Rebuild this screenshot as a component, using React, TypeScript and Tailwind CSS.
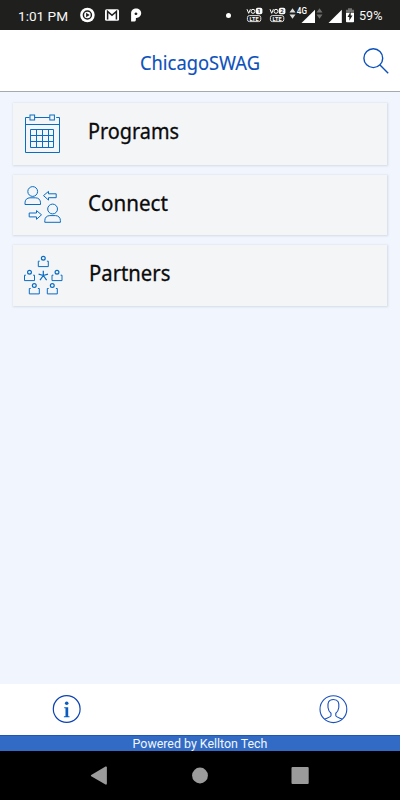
import type { ReactNode } from "react";

interface MenuItem {
  label: string;
  icon: ReactNode;
  cardClass: string;
  labelClass: string;
}

function VolteIcon({ sim }: { sim: number }) {
  return (
    <svg width="18" height="16" viewBox="0 0 18 16" fill="none">
      <path d="M1 2.2 2.7 6.3 4.4 2.2" stroke="#fff" strokeWidth="1" />
      <circle cx="7" cy="4.3" r="2" stroke="#fff" strokeWidth="1" />
      <rect x="9.8" y="0.8" width="6.6" height="6.4" rx="1.8" fill="#fff" />
      <text
        x="13.1"
        y="6.2"
        fontSize="6"
        fontWeight="700"
        textAnchor="middle"
        fill="#1f1f1d"
      >
        {sim}
      </text>
      <rect x="1.4" y="8.6" width="13.4" height="6" rx="2" stroke="#ddd" />
      <text
        x="8.1"
        y="13.6"
        fontSize="5.6"
        fontWeight="700"
        textAnchor="middle"
        fill="#fff"
      >
        LTE
      </text>
    </svg>
  );
}

function StatusBar() {
  return (
    <div className="flex h-[30px] items-center bg-[#1f1f1d] font-['Roboto',sans-serif] text-white">
      <span className="ml-[18px] w-[61px] whitespace-nowrap pt-px text-[13.6px] leading-[30px] text-[#f8f8f8]">
        1:01 PM
      </span>
      <svg width="64" height="16" viewBox="79 7 64 16" fill="none">
        <circle cx="87.4" cy="15" r="7.3" fill="#fff" />
        <circle cx="87.4" cy="15" r="4" stroke="#1f1f1d" strokeWidth="1.5" />
        <path d="M86.1 12.8v4.4l3.5-2.2z" fill="#1f1f1d" />
        <rect x="105" y="9.2" width="14" height="11.6" rx="1.5" fill="#fff" />
        <path
          d="M107.6 19.4v-8l4.4 3.9 4.4-3.9v8"
          stroke="#1f1f1d"
          strokeWidth="1.5"
        />
        <path
          d="M131.1 21.6v-8.3c0-3 2.2-4.9 5-4.9s5.1 2 5.1 4.7-2.2 4.8-4.8 4.8h-.5v1.8c0 1.3-.8 1.9-2 1.9z"
          fill="#fff"
        />
        <path d="M135.1 14.4v-1.3h1.7v1.3z" fill="#1f1f1d" stroke="#1f1f1d" />
      </svg>
      <div className="ml-[83px] h-[5px] w-[5px] rounded-full bg-white" />
      <div className="ml-[15px] flex gap-[5px]">
        <VolteIcon sim={1} />
        <VolteIcon sim={2} />
      </div>
      <svg width="67" height="20" viewBox="287 5 67 20">
        <path d="M289.5 12.5h6l-3-4.3zM289.5 14.5h6l-3 4.3z" fill="#ddd" />
        <path d="M316.5 12.5h6l-3-4.3zM316.5 14.5h6l-3 4.3z" fill="#70706e" />
        <path d="M301.5 23h13.5V9.8z" fill="#fff" />
        <text
          x="296.8"
          y="14"
          fontSize="9"
          fontWeight="500"
          textLength="10.2"
          lengthAdjust="spacingAndGlyphs"
          fill="#fff"
          stroke="#1f1f1d"
          strokeWidth="1.4"
          paintOrder="stroke"
        >
          4G
        </text>
        <path d="M328.5 23h13.3V9.8z" fill="#fff" />
        <path d="M346 13V9.8h2V8.3h4v1.5h2V13z" fill="#70706e" />
        <path d="M346 13h8v8.4q0 .8-.8.8h-6.4q-.8 0-.8-.8z" fill="#fff" />
        <path d="M350.7 11.5v4h1.8l-3.2 5.3v-3.7h-1.8z" fill="#1f1f1d" />
      </svg>
      <span className="ml-[5px] pt-px text-[12.6px] leading-[30px] text-[#f8f8f8]">
        59%
      </span>
    </div>
  );
}

function CalendarIcon() {
  return (
    <svg width="40" height="42" viewBox="22 112 40 42" fill="none">
      <g stroke="#0b6cc4">
        <path d="M29.5 117.5h-4v35h34v-35h-3.3M34.8 117.5h14.7M25.5 124.5h34" />
        <rect x="30" y="115" width="4.6" height="5" />
        <rect x="49.8" y="115" width="4.6" height="5" />
        <path d="M30.5 129.5h23v18h-23zM36.5 129.5v18M42.5 129.5v18M48.5 129.5v18M30.5 135.5h23M30.5 141.5h23" />
      </g>
    </svg>
  );
}

function ConnectIcon() {
  return (
    <svg width="40" height="40" viewBox="22 185 40 40" fill="none">
      <g stroke="#0b6cc4">
        <circle cx="32.7" cy="191.5" r="4.9" />
        <path d="M25 204.5v-1.7c0-3 2-5 5-5h5.5c3 0 5 2 5 5v1.7z" />
        <circle cx="52.6" cy="209" r="4.9" />
        <path d="M44.8 222.3v-1.7c0-3 2-5 5-5h5.6c3 0 5 2 5 5v1.7z" />
        <path d="m43.5 195.6 5-4.2v2.4h7.7v3.9h-7.7v2.4z" />
        <path d="m41.5 214.8-5-4.2v2.4h-7.3v3.9h7.3v2.4z" />
      </g>
    </svg>
  );
}

const people = [
  { x: 43.3, y: 258 },
  { x: 29.5, y: 272 },
  { x: 57, y: 272 },
  { x: 34.3, y: 285.3 },
  { x: 52.3, y: 285.3 },
];

function PartnersIcon() {
  return (
    <svg width="42" height="40" viewBox="22 255 42 40" fill="none">
      <g stroke="#0b6cc4">
        {people.map((p) => (
          <g key={`${p.x}-${p.y}`} transform={`translate(${p.x} ${p.y})`}>
            <circle cx="0" cy="0.2" r="1.9" strokeWidth="1.2" />
            <path d="M-3.6 3.2h-1.4v5.4h10V3.2h-1.4" />
          </g>
        ))}
        <path
          d="M43.3 275.5v-4.7M43.3 275.5l-4.7-1.3M43.3 275.5l4.7-1.3M43.3 275.5l-3.3 4.7M43.3 275.5l3.3 4.7"
          strokeWidth="1.2"
        />
      </g>
    </svg>
  );
}

const items: MenuItem[] = [
  {
    label: "Programs",
    icon: <CalendarIcon />,
    cardClass: "h-[62px] pt-[9px]",
    labelClass: "ml-[26px] mt-[4px] scale-x-[0.945]",
  },
  {
    label: "Connect",
    icon: <ConnectIcon />,
    cardClass: "h-[60px] pt-[10px]",
    labelClass: "ml-[26px] mt-[3px] scale-x-[0.98]",
  },
  {
    label: "Partners",
    icon: <PartnersIcon />,
    cardClass: "h-[61px] pt-[10px]",
    labelClass: "ml-[27px] mt-[3px] scale-x-[0.965]",
  },
];

export default function App() {
  return (
    <div className="flex h-[800px] w-[400px] flex-col overflow-hidden bg-[#f0f5fe]">
      <StatusBar />

      <header className="flex h-[62px] items-start border-b border-[#a5a9b0] bg-white pl-[139.500px]">
        <h1 className="mt-[19px] w-[222.500px] text-[20px] leading-[28px] font-['Noto_Sans',sans-serif] text-[#0c51bb]">
          <span className="inline-block origin-left scale-x-[0.915] whitespace-nowrap [-webkit-text-stroke:0.15px_#0c51bb]">
            ChicagoSWAG
          </span>
        </h1>
        <svg width="28" height="28" viewBox="362 47 28 28" fill="none" className="mt-[17px]">
          <g stroke="#0c51bb" strokeWidth="1.4">
            <circle cx="373.3" cy="58.2" r="9.4" />
            <path d="m380 65 8.2 8.2" />
          </g>
        </svg>
      </header>

      <main className="flex flex-1 flex-col gap-[10px] px-[13px] pt-[11px]">
        {items.map((item) => (
          <div
            key={item.label}
            className={`flex items-start bg-[#f3f5f7] pl-[9px] shadow-[0_0_2px_0.5px_#d3dae4] ${item.cardClass}`}
          >
            <div className="w-[40px] shrink-0">{item.icon}</div>
            <span
              className={`origin-left text-[21px] leading-[30px] font-['Noto_Sans',sans-serif] text-[#0b0b0b] [-webkit-text-stroke:0.3px_#0b0b0b] ${item.labelClass}`}
            >
              {item.label}
            </span>
          </div>
        ))}
      </main>

      <footer>
        <div className="flex h-[51px] items-start justify-between bg-white px-[52px] pt-[10px]">
          <svg width="30" height="30" viewBox="52 694 30 30" fill="none">
            <circle cx="66.7" cy="709" r="13.4" stroke="#0c42b4" strokeWidth="1.2" />
            <circle cx="66.7" cy="703.2" r="1.8" fill="#0b5cc0" />
            <path
              d="M64.2 707.2h4v9h1.3v1h-5.6v-1h1.6v-8h-1.3z"
              fill="#0b5cc0"
            />
          </svg>
          <svg width="30" height="30" viewBox="318 694 30 30" fill="none">
            <g stroke="#1a50bc" strokeWidth="1.1">
              <circle cx="333.4" cy="709.2" r="13.4" />
              <path d="M324.6 719.1c2.6-1.2 6.4-2 6.4-3.6v-2.3c-1.8-1.3-2.7-3.4-3-5.7-.5-4.7.4-8 5.4-8s5.9 3.3 5.4 8c-.3 2.3-1.2 4.4-3 5.7v2.3c0 1.6 3.8 2.4 6.4 3.6" />
            </g>
          </svg>
        </div>
        <div className="h-[16px] border-t border-[#1e57b3] bg-[#316bc5] text-center font-['Roboto',sans-serif] text-[12.4px] leading-[16px] text-[#f2f6fc]">
          Powered by Kellton Tech
        </div>
        <nav className="flex h-[49px] items-center bg-black pl-[90px]">
          <svg width="220" height="22" viewBox="90 765 220 22" fill="#9b9b9b">
            <path d="M91.2 775 105.5 766.5q1.4-.5 1.4 1v16q0 1.5-1.4 1L91.2 776.2q-.7-.6 0-1.2z" />
            <circle cx="200" cy="775.5" r="7.9" />
            <rect x="291.5" y="767" width="17.2" height="17" rx="1" />
          </svg>
        </nav>
      </footer>
    </div>
  );
}
